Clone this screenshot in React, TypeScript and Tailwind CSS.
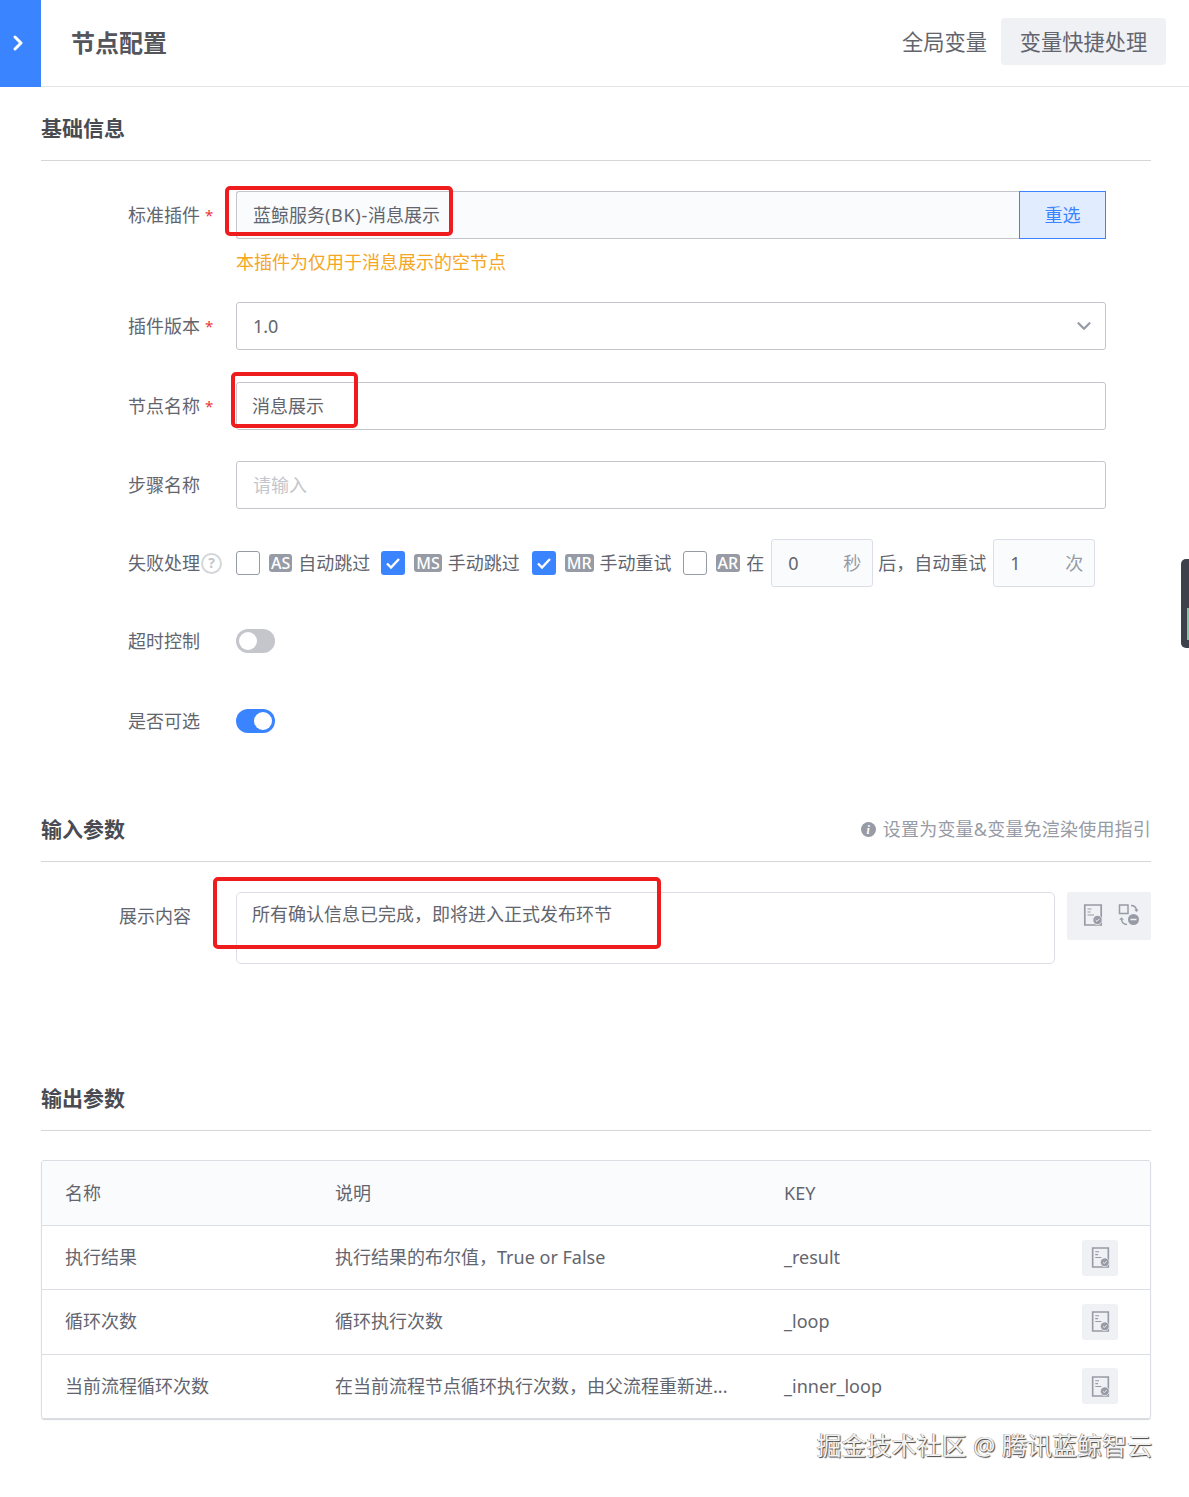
import React from 'react';
import { ChevronDown, ChevronRight } from 'lucide-react';

const DocIcon = ({ size = 22 }: { size?: number }) => (
    <svg width={size} height={size} viewBox="0 0 22 22" fill="none">
        <path d="M2.800 1h16.400v20H2.800z" stroke="#979ba5" strokeWidth="1.700" />
        <path d="M5.500 5h4M5.500 8h3M5.500 11h6.500" stroke="#979ba5" strokeWidth="1.200" />
        <circle cx="15.500" cy="16" r="4.600" fill="#979ba5" stroke="#f0f1f5" strokeWidth="0.800" />
        <path d="M13.600 16l1.400 1.400 2.400-2.600" stroke="#f0f1f5" strokeWidth="1" />
    </svg>
);

const SwapIcon = () => (
    <svg width="22" height="22" viewBox="0 0 22 22" fill="none">
        <rect x="1.500" y="1" width="8.500" height="8.500" stroke="#979ba5" strokeWidth="1.500" />
        <path d="M13 1.500c3 0 5 1.500 5.500 4.500" stroke="#979ba5" strokeWidth="1.500" />
        <path d="M16.200 5.500l2.300 2.500 2.300-2.500" fill="#979ba5" />
        <path d="M9 20.500c-3.500 0-5-2-5.500-5" stroke="#979ba5" strokeWidth="1.500" />
        <path d="M1.200 15.800l2.300-2.500 2.300 2.500" fill="#979ba5" />
        <circle cx="15.500" cy="15.500" r="5.500" fill="#979ba5" />
        <path d="M12.500 15.500h6" stroke="#f0f1f5" strokeWidth="1.500" />
    </svg>
);

const SectionTitle = ({ title, extra }: { title: string; extra?: React.ReactNode }) => (
    <div className="flex h-[63px] items-center justify-between border-b border-[#d5d6da] pb-[1px]">
        <h2 className="text-[21px] font-bold leading-none text-[#4a4b52]">{title}</h2>
        {extra}
    </div>
);

const FormRow = ({ label, required, aside, className, children }: { label: string; required?: boolean; aside?: React.ReactNode; className?: string; children: React.ReactNode }) => (
    <div className={`flex h-12 items-center ${className ?? ''}`}>
        <div className="flex w-[195px] shrink-0 items-center pl-[87px] text-[18px] text-[#63656e]">
            <span className="whitespace-nowrap">{label}</span>
            {required && <span className="ml-[5px] text-[15px] text-[#ea3636]">*</span>}
            {aside}
        </div>
        {children}
    </div>
);

const Check = ({ checked }: { checked?: boolean }) =>
    checked ? (
        <span className="flex h-6 w-6 shrink-0 items-center justify-center rounded-[3px] bg-[#3a84ff]">
            <svg width="16" height="14" viewBox="0 0 16 14" fill="none">
                <path d="M2 7.500l4 4 8-8.500" stroke="#fff" strokeWidth="2.400" />
            </svg>
        </span>
    ) : (
        <span className="h-6 w-6 shrink-0 rounded-[3px] border border-[#979ba5] bg-white" />
    );

const Badge = ({ children }: { children: string }) => (
    <span className="ml-[9px] flex h-[18px] items-center rounded-[3px] bg-[#979ba5] px-[2px] text-[16px] font-medium leading-none text-white">{children}</span>
);

const Option = ({ checked, tag, text, className }: { checked?: boolean; tag: string; text: string; className?: string }) => (
    <div className={`flex items-center ${className ?? ''}`}>
        <Check checked={checked} />
        <Badge>{tag}</Badge>
        <span className="ml-[6px] whitespace-nowrap text-[18px] text-[#63656e]">{text}</span>
    </div>
);

const UnitInput = ({ value, unit, className }: { value: string; unit: string; className?: string }) => (
    <div className={`flex h-12 w-[102px] shrink-0 items-center justify-between rounded-[3px] border border-[#dcdee5] bg-[#fafbfd] pl-4 pr-[11px] text-[18px] ${className ?? ''}`}>
        <span className="text-[#63656e]">{value}</span>
        <span className="text-[#979ba5]">{unit}</span>
    </div>
);

const Switch = ({ on }: { on?: boolean }) => (
    <span className={`flex h-6 w-[39px] items-center rounded-full px-[3px] ${on ? 'justify-end bg-[#3a84ff]' : 'justify-start bg-[#c4c6cc]'}`}>
        <span className="h-[18px] w-[18px] rounded-full bg-white" />
    </span>
);

const RedBox = ({ className }: { className: string }) => (
    <div className={`pointer-events-none absolute rounded-[5px] border-4 border-[#ee1c1c] ${className}`} />
);

const outputs = [
    { name: '执行结果', desc: '执行结果的布尔值，True or False', key: '_result' },
    { name: '循环次数', desc: '循环执行次数', key: '_loop' },
    { name: '当前流程循环次数', desc: '在当前流程节点循环执行次数，由父流程重新进...', key: '_inner_loop' },
];

const App = () => {
    return (
        <div className="relative h-[1497px] w-[1189px] overflow-hidden bg-white font-['Noto_Sans','Noto_Sans_CJK_SC',sans-serif] text-[#63656e]">
            {/* header */}
            <div className="flex h-[87px] items-center border-b border-[#e4e5e9]">
                <div className="flex h-[87px] w-[41px] items-center justify-center bg-[#3a84ff]">
                    <ChevronRight size={24} strokeWidth={3} className="-ml-[5px] text-white" />
                </div>
                <h1 className="ml-[30px] text-[24px] font-bold text-[#54565c]">节点配置</h1>
                <div className="mb-[3px] ml-auto mr-[23px] flex items-center gap-[14px] text-[21.250px] text-[#63656e]">
                    <span>全局变量</span>
                    <span className="flex h-[47px] w-[165px] items-center justify-center rounded-[4px] bg-[#f0f1f5]">变量快捷处理</span>
                </div>
            </div>

            <div className="pl-[41px] pr-[38px] pt-[11px]">
                {/* 基础信息 */}
                <SectionTitle title="基础信息" />
                <div className="mr-[45px] mt-[30px]">
                    <FormRow label="标准插件" required>
                        <div className="flex h-12 flex-1 items-center rounded-l-[3px] border border-r-0 border-[#c4c6cc] bg-[#fafbfd] pl-4 text-[18px]">
                            蓝鲸服务<span className="tracking-[0.7px]">(BK)-</span>消息展示
                        </div>
                        <div className="flex h-12 w-[87px] items-center justify-center border border-[#3a84ff] bg-[#e1ecff] text-[18px] text-[#3a84ff]">重选</div>
                    </FormRow>
                    <p className="ml-[195px] mt-[10px] text-[18px] leading-[26px] text-[#f5a623]">本插件为仅用于消息展示的空节点</p>
                    <FormRow label="插件版本" required className="mt-[27px]">
                        <div className="flex h-12 flex-1 items-center justify-between rounded-[3px] border border-[#c4c6cc] pl-4 pr-[10px] text-[18px]">
                            <span>1.0</span>
                            <ChevronDown size={22} strokeWidth={2.500} className="text-[#979ba5]" />
                        </div>
                    </FormRow>
                    <FormRow label="节点名称" required className="mt-8">
                        <div className="flex h-12 flex-1 items-center rounded-[3px] border border-[#c4c6cc] pl-[15px] text-[18px]">消息展示</div>
                    </FormRow>
                    <FormRow label="步骤名称" className="mt-[31px]">
                        <div className="flex h-12 flex-1 items-center rounded-[3px] border border-[#c4c6cc] pl-4 text-[18px] text-[#c4c6cc]">请输入</div>
                    </FormRow>
                    <FormRow
                        label="失败处理"
                        className="mt-[30px]"
                        aside={<span className="ml-[1px] flex h-[21px] w-[21px] shrink-0 items-center justify-center rounded-full border-2 border-[#d5d6da] text-[14px] font-bold leading-none text-[#c4c6cc]">?</span>}
                    >
                        <Option tag="AS" text="自动跳过" />
                        <Option checked tag="MS" text="手动跳过" className="ml-[11px]" />
                        <Option checked tag="MR" text="手动重试" className="ml-[12px]" />
                        <Option tag="AR" text="在" className="ml-[11px]" />
                        <UnitInput value="0" unit="秒" className="ml-[7px]" />
                        <span className="ml-[5px] whitespace-nowrap text-[18px]">后，自动重试</span>
                        <UnitInput value="1" unit="次" className="ml-[7px]" />
                    </FormRow>
                    <FormRow label="超时控制" className="mt-[30px]">
                        <Switch />
                    </FormRow>
                    <FormRow label="是否可选" className="mt-8">
                        <Switch on />
                    </FormRow>
                </div>

                {/* 输入参数 */}
                <div className="mt-[54px]">
                    <SectionTitle
                        title="输入参数"
                        extra={
                            <span className="flex items-center text-[18px] tracking-[0.2px] text-[#979ba5]">
                                <span className="mr-[7px] flex h-[15px] w-[15px] items-center justify-center rounded-full bg-[#979ba5] font-['Liberation_Serif',serif] text-[12px] font-bold italic leading-none text-white">i</span>
                                设置为变量&amp;变量免渲染使用指引
                            </span>
                        }
                    />
                </div>
                <div className="mt-[30px] flex">
                    <div className="w-[195px] shrink-0 pl-[78px] pt-[11px] text-[18px]">展示内容</div>
                    <div className="h-[72px] flex-1 rounded-[5px] border border-[#dcdee5] pl-[15px] pt-[8px] text-[18px]">所有确认信息已完成，即将进入正式发布环节</div>
                    <div className="ml-3 flex h-12 w-[84px] items-start gap-[14px] rounded-[2px] bg-[#f0f1f5] pl-[15px] pt-[12px]">
                        <DocIcon />
                        <SwapIcon />
                    </div>
                </div>

                {/* 输出参数 */}
                <div className="mt-[104px]">
                    <SectionTitle title="输出参数" />
                </div>
                <div className="mt-[29px] overflow-hidden rounded-[3px] border border-[#dcdee5] text-[18px] shadow-[0_1px_1px_#d5d6da]">
                    <div className="flex h-[64px] items-center bg-[#fafbfd]">
                        <span className="w-[293px] pl-[23px]">名称</span>
                        <span className="w-[449px]">说明</span>
                        <span>KEY</span>
                    </div>
                    {outputs.map((row) => (
                        <div key={row.key} className="flex h-[64.250px] items-center border-t border-[#dcdee5]">
                            <span className="w-[293px] pl-[23px]">{row.name}</span>
                            <span className="w-[449px] whitespace-nowrap">{row.desc}</span>
                            <span>{row.key}</span>
                            <span className="ml-auto mr-8 flex h-9 w-9 items-center justify-center rounded-[3px] bg-[#f0f1f5]">
                                <DocIcon size={21} />
                            </span>
                        </div>
                    ))}
                </div>
            </div>

            {/* annotations over the screenshot */}
            <RedBox className="left-[225px] top-[186px] h-[50px] w-[228px]" />
            <RedBox className="left-[231px] top-[372px] h-[56px] w-[127px]" />
            <RedBox className="left-[213px] top-[877px] h-[72px] w-[448px]" />
            <div className="absolute left-[1181px] top-[559px] h-[89px] w-4 rounded-l-[5px] bg-[#3c414c]">
                <div className="absolute left-[6px] top-[49px] h-8 w-[2px] bg-[#7fc8a0]" />
            </div>
            <div className="absolute right-[37px] top-[1428px] whitespace-nowrap text-[25px] leading-[34px] text-[#f2f2f2] [text-shadow:1px_1px_1px_#444,-0.5px_-0.5px_0.5px_#777]">掘金技术社区 @ 腾讯蓝鲸智云</div>
        </div>
    );
};

export default App;
